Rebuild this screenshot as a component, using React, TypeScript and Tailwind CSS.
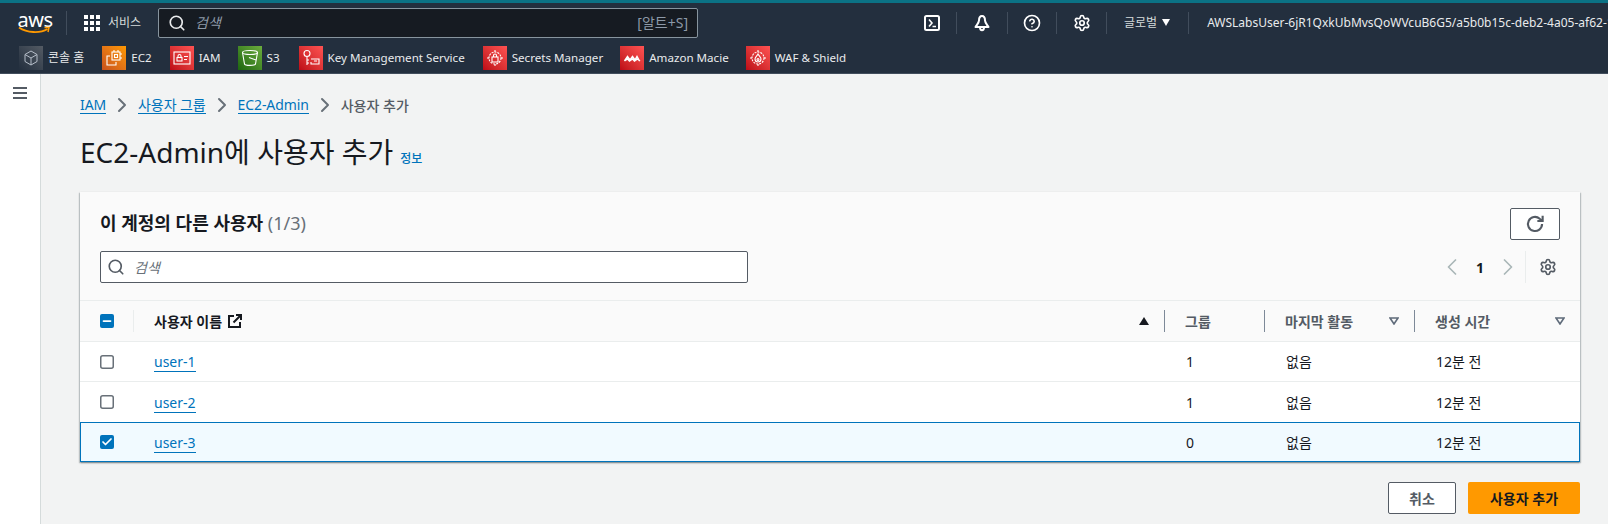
import React from 'react';
import { Search, ChevronLeft, ChevronRight, Settings, CircleHelp, Check, Minus } from 'lucide-react';

const font = { fontFamily: '"Noto Sans", "Noto Sans CJK KR", sans-serif' };

const Tile = ({ className, children }: { className: string; children: React.ReactNode }) => (
  <span className={`w-6 h-6 flex items-center justify-center shrink-0 ${className}`}>
    <svg width="18" height="18" viewBox="0 0 18 18" fill="none" stroke="#fff" strokeWidth="1.1">
      {children}
    </svg>
  </span>
);

const red = 'bg-linear-to-tr from-[#bd0816] to-[#ff5252]';

const favorites = [
  {
    label: 'EC2', gap: 'ml-[18px]', tile: 'bg-linear-to-tr from-[#c8511b] to-[#ff9900]',
    icon: <><rect x="7" y="3" width="8" height="8" /><rect x="9.5" y="5.5" width="3" height="3" /><path d="M5 7H2v9h9v-3M9 1v2M13 1v2M17 5h-2M17 9h-2" /></>,
  },
  {
    label: 'IAM', gap: 'ml-[18px]', tile: red,
    icon: <><rect x="1" y="3" width="16" height="12" /><rect x="4" y="8.5" width="5" height="3.5" /><path d="M5 8.5V7a1.5 1.5 0 0 1 3 0v1.5M11 7.5h4M11 10.5h3" /></>,
  },
  {
    label: 'S3', gap: 'ml-[17px]', tile: 'bg-linear-to-tr from-[#1b660f] to-[#6cae3e]',
    icon: <><ellipse cx="9" cy="3.5" rx="7.5" ry="2" /><path d="M1.500 3.500 3.500 15c.5 1.800 10.500 1.800 11 0l2-11.500M8 8.500l7 2.500" /></>,
  },
  {
    label: 'Key Management Service', gap: 'ml-[19px]', tile: red,
    icon: <><circle cx="5" cy="4.500" r="3" /><path d="M5 7.500V16M5 11h2M5 14h2M9 10h8v5H9v-2M12 12h3" /></>,
  },
  {
    label: 'Secrets Manager', gap: 'ml-[18px]', tile: red,
    icon: <><circle cx="9" cy="9" r="6" strokeDasharray="2 1" /><rect x="6" y="8" width="6" height="5" /><path d="M7.500 8V6.500a1.500 1.500 0 0 1 3 0V8M9 1v2M9 15v2M1 9h2M15 9h2" /></>,
  },
  {
    label: 'Amazon Macie', gap: 'ml-[17px]', tile: red,
    icon: <path strokeWidth="1.500" d="M1.500 12 4.500 7.500 7 11 9.500 7.500 12 11l2-3.500 2.500 4.500M1.500 12l3-2 2 2 3-2 2 2 3-2 2.500 2" />,
  },
  {
    label: 'WAF & Shield', gap: 'ml-[17px]', tile: red,
    icon: <><circle cx="9" cy="9" r="6" strokeDasharray="2 1" /><path d="M9 5c1 2 3 3 3 5a3 3 0 0 1-6 0c0-2 2-3 3-5Z" /><circle cx="9" cy="10.500" r="1" /><path d="M9 1v2M9 15v2M1 9h2M15 9h2" /></>,
  },
];

const NavDivider = () => <span className="block w-px h-[22px] bg-[#414d5c] shrink-0" />;

const TopNav = () => (
  <header className="bg-[#232f3e] border-t-[3px] border-[#0b7285] border-b border-b-[#414d5c] h-[74px] shrink-0 text-[#d5dbdb]">
    <div className="h-[39px] flex items-center whitespace-nowrap overflow-hidden">
      <span className="relative w-[34px] h-[24px] ml-[18px] shrink-0 flex justify-center">
        <span className="text-white text-[20px] leading-[17px] font-normal tracking-[-0.5px]">aws</span>
        <svg className="absolute left-0 bottom-0" width="34" height="9" viewBox="0 0 34 9" fill="none">
          <path d="M1 1.500C9 7 22 7.500 29.500 3" stroke="#ff9900" strokeWidth="1.800" />
          <path d="M26.500 1.500 31 1.500 30 6" stroke="#ff9900" strokeWidth="1.500" />
        </svg>
      </span>
      <span className="w-px h-[24px] bg-[#414d5c] ml-[14px] shrink-0" />
      <svg className="ml-[17px] shrink-0" width="16" height="16" viewBox="0 0 16 16" fill="#fff">
        {[0, 6, 12].map((y) => [0, 6, 12].map((x) => <rect key={`${x}-${y}`} x={x} y={y} width="4" height="4" />))}
      </svg>
      <span className="ml-[8px] text-[12px] w-[50px] shrink-0">서비스</span>
      <div className="w-[540px] h-[30px] bg-[#161b22] border border-[#87949e] rounded-[2px] flex items-center pl-[9px] pr-[9px] shrink-0">
        <Search size={18} color="#e9ebed" strokeWidth={2.2} />
        <span className="ml-[9px] text-[14px] italic text-[#8d99a8]">검색</span>
        <span className="ml-auto text-[14px] text-[#8d99a8]">[알트+S]</span>
      </div>
      <span className="w-[25px] shrink-0 ml-[221px] flex justify-center">
        <svg width="18" height="18" viewBox="0 0 18 18" fill="none" stroke="#fff" strokeWidth="2">
          <rect x="2" y="2" width="14" height="14" rx="1.500" />
          <path d="m6 5.500 3 3.500-3 3.500M9.500 12.500H13" strokeWidth="1.600" />
        </svg>
      </span>
      <span className="ml-[12px] mr-[16px]"><NavDivider /></span>
      <svg className="shrink-0" width="18" height="18" viewBox="0 0 18 18" fill="none" stroke="#fff" strokeWidth="2">
        <path d="M9 2C6.500 2 6 4.500 6 6.500c0 2-1.500 3.500-3.500 6.500h13c-2-3-3.500-4.500-3.500-6.500C12 4.500 11.500 2 9 2Z" strokeLinejoin="round" />
        <path d="M7 13.500c0 3.500 4 3.500 4 0" />
      </svg>
      <span className="ml-[16px] mr-[15px]"><NavDivider /></span>
      <CircleHelp size={18} color="#fff" strokeWidth={2.2} className="shrink-0" />
      <span className="ml-[15px] mr-[16px]"><NavDivider /></span>
      <Settings size={18} color="#fff" strokeWidth={2.2} className="shrink-0" />
      <span className="ml-[15px]"><NavDivider /></span>
      <span className="ml-[17px] text-[12px] shrink-0">글로벌</span>
      <span className="ml-[5px] w-0 h-0 border-x-[4px] border-x-transparent border-t-[7px] border-t-white shrink-0" />
      <span className="ml-[18px]"><NavDivider /></span>
      <span className="ml-[18px] text-[12px] text-[#e9ebed]">AWSLabsUser-6jR1QxkUbMvsQoWVcuB6G5/a5b0b15c-deb2-4a05-af62-1</span>
    </div>
    <div className="h-[31px] pt-px flex items-center pl-[19px] text-[11.6px] text-[#e9ebed] whitespace-nowrap">
      <span className="w-6 h-6 flex items-center justify-center bg-linear-to-tr from-[#232f3e] to-[#545b64] shrink-0">
        <svg width="18" height="18" viewBox="0 0 18 18" fill="none" stroke="#b6bec9" strokeWidth="1">
          <path d="M9 2 15 5.500V12.500L9 16 3 12.500V5.500ZM3 5.500 9 9l6-3.500M9 9v7" />
        </svg>
      </span>
      <span className="ml-[5px] text-[12px]">콘솔 홈</span>
      {favorites.map((f) => (
        <span key={f.label} className={`flex items-center ${f.gap}`}>
          <Tile className={f.tile}>{f.icon}</Tile>
          <span className="ml-[5px]">{f.label}</span>
        </span>
      ))}
    </div>
  </header>
);

const Sep = () => <ChevronRight size={24} color="#687078" strokeWidth={2} className="mx-[4px]" />;

const Crumb = ({ children }: { children: React.ReactNode }) => (
  <a className="text-[#0073bb] border-b border-[#0073bb] leading-[17px] tracking-[-0.1px]">{children}</a>
);

const Box = ({ state }: { state: 'off' | 'on' | 'mixed' }) =>
  state === 'off' ? (
    <svg className="block" width="14" height="14" viewBox="0 0 14 14" fill="#fff" stroke="#687078" strokeWidth="1.500">
      <rect x="0.750" y="0.750" width="12.500" height="12.500" rx="2" />
    </svg>
  ) : (
    <span className="w-[14px] h-[14px] rounded-[2px] bg-[#0073bb] flex items-center justify-center">
      {state === 'on' ? <Check size={12} color="#fff" strokeWidth={3.500} /> : <Minus size={12} color="#fff" strokeWidth={3.500} />}
    </span>
  );

const SortDown = () => (
  <svg width="10" height="8" viewBox="0 0 10 8" fill="none" stroke="#5f6b7a" strokeWidth="1.600">
    <path d="M1 1h8L5 7Z" />
  </svg>
);

const HeadCell = ({ children, sort, className }: { children: React.ReactNode; sort?: boolean; className: string }) => (
  <div className={`h-[22px] flex items-center border-l border-[#7d8998] pl-[20px] pr-[15px] ${className}`}>
    <span className="font-bold text-[#545b64] text-[14px]">{children}</span>
    {sort && <span className="ml-auto flex"><SortDown /></span>}
  </div>
);

const users = [
  { name: 'user-1', groups: 1, selected: false },
  { name: 'user-2', groups: 1, selected: false },
  { name: 'user-3', groups: 0, selected: true },
];

const App = () => (
  <div className="w-[1608px] h-[524px] flex flex-col overflow-hidden bg-[#f2f3f3] text-[#16191f]" style={font}>
    <TopNav />
    <div className="flex flex-1 min-h-0">
      <aside className="w-[41px] shrink-0 bg-white border-r border-[#d5dbdb] pt-[13px] pl-[13px]">
        <svg className="block" width="14" height="12" viewBox="0 0 14 12" fill="#545b64">
          <rect width="14" height="2" />
          <rect y="5" width="14" height="2" />
          <rect y="10" width="14" height="2" />
        </svg>
      </aside>
      <main className="flex-1 min-w-0 pl-[39px] pr-[28px]">
        <nav className="flex items-center text-[14px] mt-[21px] h-[20px]">
          <Crumb>IAM</Crumb>
          <Sep />
          <Crumb>사용자 그룹</Crumb>
          <Sep />
          <Crumb>EC2-Admin</Crumb>
          <Sep />
          <span className="text-[#545b64] font-medium">사용자 추가</span>
        </nav>
        <div className="flex items-baseline mt-[18px] h-[38px]">
          <h1 className="text-[28px] leading-[38px] font-normal">EC2-Admin에 사용자 추가</h1>
          <a className="ml-[7px] text-[12px] font-medium text-[#0073bb]">정보</a>
        </div>
        <section className="mt-[21px] bg-white shadow-[0_1px_2px_rgba(0,28,36,0.3),1px_1px_1px_rgba(0,28,36,0.15),-1px_1px_1px_rgba(0,28,36,0.15)]">
          <div className="bg-[#fafafa] h-[109px] border-b border-[#eaeded] px-[20px] pt-[16px]">
            <div className="flex items-start">
              <h2 className="text-[18px] font-bold mt-[2px] leading-[26px]">
                이 계정의 다른 사용자 <span className="font-normal text-[#687078]">(1/3)</span>
              </h2>
              <button className="ml-auto w-[50px] h-[32px] border border-[#545b64] rounded-[2px] bg-white flex items-center justify-center">
                <svg width="20" height="20" viewBox="0 0 17 17" fill="none" stroke="#545b64" strokeWidth="1.800">
                  <path d="M14.500 8.500a6 6 0 1 1-2-4.500L15 6" />
                  <path d="M15 1.500V6h-4.500" />
                </svg>
              </button>
            </div>
            <div className="flex items-center mt-[11px]">
              <div className="w-[648px] h-[32px] border border-[#545b64] rounded-[2px] bg-white flex items-center pl-[6px]">
                <Search size={18} color="#545b64" strokeWidth={2.200} />
                <span className="ml-[9px] text-[14px] italic text-[#687078]">검색</span>
              </div>
              <div className="ml-auto flex items-center mr-[3px]">
                <ChevronLeft size={28} color="#aab7b8" strokeWidth={1.500} />
                <span className="mx-[10px] text-[14px] font-bold">1</span>
                <ChevronRight size={28} color="#aab7b8" strokeWidth={1.500} />
                <span className="w-px h-[32px] bg-[#eaeded] ml-[3px] mr-[13px]" />
                <Settings size={18} color="#545b64" strokeWidth={2.200} />
              </div>
            </div>
          </div>
          <div className="h-[41px] flex items-center bg-[#fafafa] border-b border-[#eaeded]">
            <div className="w-[54px] pl-[20px] h-[22px] flex items-center border-r border-[#eaeded] shrink-0"><Box state="mixed" /></div>
            <div className="flex-1 flex items-center pl-[20px] pr-[15px]">
              <span className="font-bold text-[14px] text-[#16191f]">사용자 이름</span>
              <svg className="ml-[6px]" width="14" height="14" viewBox="0 0 14 14" fill="none" stroke="#16191f" strokeWidth="2">
                <path d="M6 2H1v11h11V8" />
                <path d="M5.500 8.500 12.500 1.500M8 1h5v5" />
              </svg>
              <span className="ml-auto w-0 h-0 border-x-[5px] border-x-transparent border-b-[8px] border-b-[#16191f]" />
            </div>
            <HeadCell className="w-[100px]">그룹</HeadCell>
            <HeadCell className="w-[150px]" sort>마지막 활동</HeadCell>
            <HeadCell className="w-[166px]" sort>생성 시간</HeadCell>
          </div>
          {users.map((u, i) => (
            <div
              key={u.name}
              className={`h-[40px] flex items-center text-[14px] ${
                u.selected ? 'bg-[#f1faff] border border-[#0073bb]' : `bg-white ${i === 1 ? '' : 'border-b border-[#eaeded]'}`
              }`}
            >
              <div className={`w-[54px] shrink-0 ${u.selected ? 'pl-[19px]' : 'pl-[20px]'}`}><Box state={u.selected ? 'on' : 'off'} /></div>
              <div className={`flex-1 ${u.selected ? 'pl-[19px]' : 'pl-[20px]'}`}>
                <a className="text-[#0073bb] border-b border-[#0073bb]">{u.name}</a>
              </div>
              <div className="w-[100px] pl-[22px]">{u.groups}</div>
              <div className="w-[150px] pl-[22px]">없음</div>
              <div className={`${u.selected ? 'w-[165px]' : 'w-[166px]'} pl-[22px]`}>12분 전</div>
            </div>
          ))}
        </section>
        <div className="flex justify-end gap-[12px] mt-[20px]">
          <button className="w-[68px] h-[32px] bg-white border border-[#545b64] rounded-[2px] text-[14px] font-bold text-[#545b64]">취소</button>
          <button className="w-[112px] h-[32px] bg-[#ff9900] rounded-[2px] text-[14px] font-bold text-[#16191f]">사용자 추가</button>
        </div>
      </main>
    </div>
  </div>
);

export default App;
